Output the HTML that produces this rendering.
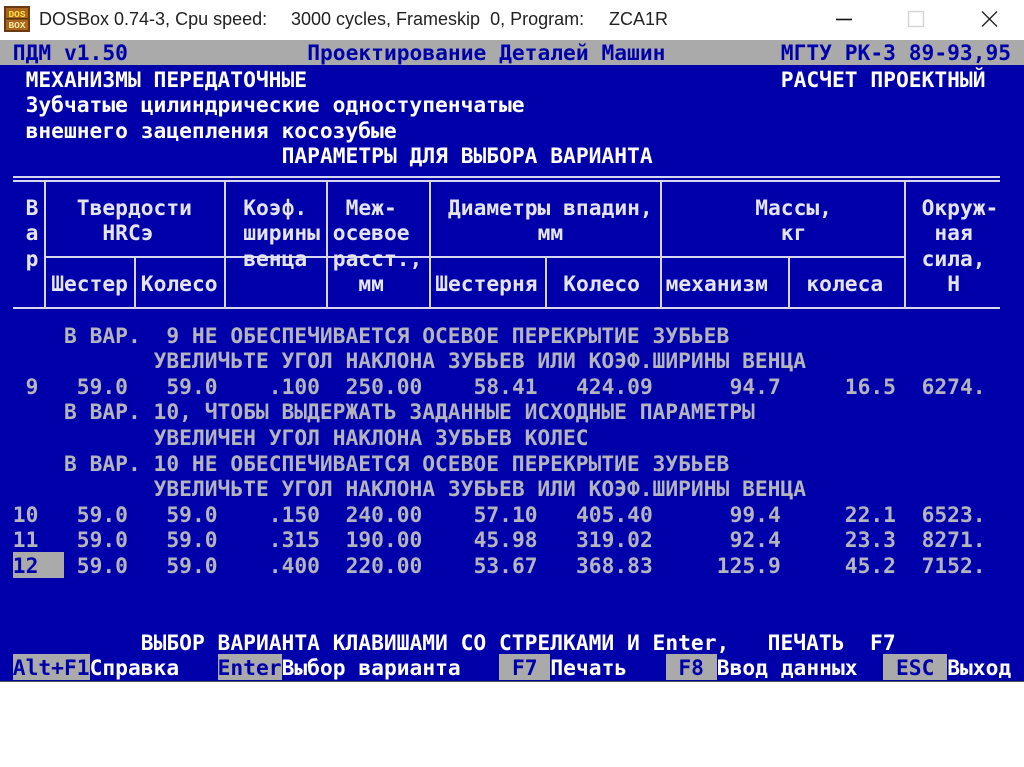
<!DOCTYPE html>
<html lang="ru"><head><meta charset="utf-8"><title>DOSBox</title>
<style>
html,body{margin:0;padding:0;background:#fff;width:1024px;height:767px;overflow:hidden}
#s{position:absolute;left:0;top:40px;width:1024px;height:641px;background:#0000aa;overflow:hidden}
.bar{position:absolute;left:0;top:0;width:1024px;height:25px;background:#aaa}
.t{position:absolute;white-space:pre;font:bold 21.26px/25.6px "DejaVu Sans Mono","Liberation Mono",monospace;color:#b4b4bc;left:calc(var(--c)*12.8px);top:calc(var(--r)*25.6px + 2px)}
.w{color:#fff}.h{color:#e4e4f2}.b{color:#0000aa}
.g{position:absolute;background:#aaa;top:calc(var(--r)*25.6px);height:25.6px;left:calc(var(--c)*12.8px);width:calc(var(--n)*12.8px)}
.l{position:absolute;background:#d6d6ee}
.tt{position:absolute;top:9px;font:18px/20px "Liberation Sans",sans-serif;color:#222;white-space:pre}
</style></head><body>
<svg style="position:absolute;left:4px;top:6px" width="26" height="26" viewBox="0 0 26 26"><rect width="26" height="26" fill="#6b3a12"/><rect x="2" y="2" width="22" height="22" fill="#a8661e"/><rect x="2" y="12" width="22" height="1.5" fill="#5a300e"/><text x="13" y="11" text-anchor="middle" font-family="Liberation Mono" font-weight="bold" font-size="9.5" fill="#ffe040">DOS</text><text x="13" y="22" text-anchor="middle" font-family="Liberation Mono" font-weight="bold" font-size="9.5" fill="#ffe8a0">BOX</text></svg>
<div class="tt" style="left:39px">DOSBox 0.74-3, Cpu speed:</div>
<div class="tt" style="left:291px">3000 cycles, Frameskip  0, Program:</div>
<div class="tt" style="left:609px">ZCA1R</div>
<svg style="position:absolute;left:820px;top:0" width="204" height="40"><path d="M16 19.5H32" stroke="#111" stroke-width="1.6"/><rect x="88.5" y="11.5" width="15" height="15" fill="#fff" stroke="#d4d4d4" stroke-width="1.4"/><path d="M162 11.5L177 26.5M177 11.5L162 26.5" stroke="#222" stroke-width="1.4"/></svg>
<div id="s">
<div class="bar"></div>
<div class="g" style="--r:20;--c:1;--n:4"></div>
<div class="g" style="--r:24;--c:1;--n:6"></div>
<div class="g" style="--r:24;--c:17;--n:5"></div>
<div class="g" style="--r:24;--c:39;--n:4"></div>
<div class="g" style="--r:24;--c:52;--n:4"></div>
<div class="g" style="--r:24;--c:69;--n:5"></div>

<div class="l" style="left:13px;top:136px;width:987px;height:1.6px"></div>
<div class="l" style="left:13px;top:140px;width:987px;height:1.6px"></div>
<div class="l" style="left:13px;top:267px;width:987px;height:1.6px"></div>
<div class="l" style="left:45px;top:216px;width:615px;height:2px"></div>
<div class="l" style="left:660px;top:216px;width:244px;height:2px"></div>
<div class="l" style="left:43.5px;top:141px;width:2.4px;height:127px"></div>
<div class="l" style="left:133.5px;top:217px;width:2.4px;height:51px"></div>
<div class="l" style="left:223.5px;top:141px;width:2.4px;height:127px"></div>
<div class="l" style="left:326px;top:141px;width:2.4px;height:127px"></div>
<div class="l" style="left:428.5px;top:141px;width:2.4px;height:127px"></div>
<div class="l" style="left:544.5px;top:217px;width:2.4px;height:51px"></div>
<div class="l" style="left:659.5px;top:141px;width:2.4px;height:127px"></div>
<div class="l" style="left:788px;top:217px;width:2.4px;height:51px"></div>
<div class="l" style="left:903.5px;top:141px;width:2.4px;height:127px"></div>

<span class="t b" style="--r:0;--c:1;top:1px">ПДМ v1.50</span>
<span class="t b" style="--r:0;--c:24;top:1px">Проектирование Деталей Машин</span>
<span class="t b" style="--r:0;--c:61;top:1px">МГТУ РК-3 89-93,95</span>

<span class="t w" style="--r:1;--c:2">МЕХАНИЗМЫ ПЕРЕДАТОЧНЫЕ</span>
<span class="t w" style="--r:1;--c:61">РАСЧЕТ ПРОЕКТНЫЙ</span>
<span class="t w" style="--r:2;--c:2">Зубчатые цилиндрические одноступенчатые</span>
<span class="t w" style="--r:3;--c:2">внешнего зацепления косозубые</span>
<span class="t w" style="--r:4;--c:22">ПАРАМЕТРЫ ДЛЯ ВЫБОРА ВАРИАНТА</span>

<span class="t h" style="--r:6;--c:2">В</span><span class="t h" style="--r:6;--c:6">Твердости</span><span class="t h" style="--r:6;--c:19">Коэф.</span><span class="t h" style="--r:6;--c:27">Меж-</span><span class="t h" style="--r:6;--c:35">Диаметры впадин,</span><span class="t h" style="--r:6;--c:59">Массы,</span><span class="t h" style="--r:6;--c:72">Окруж-</span>
<span class="t h" style="--r:7;--c:2">а</span><span class="t h" style="--r:7;--c:8">HRCэ</span><span class="t h" style="--r:7;--c:19">ширины</span><span class="t h" style="--r:7;--c:26">осевое</span><span class="t h" style="--r:7;--c:42">мм</span><span class="t h" style="--r:7;--c:61">кг</span><span class="t h" style="--r:7;--c:73">ная</span>
<span class="t h" style="--r:8;--c:2">р</span><span class="t h" style="--r:8;--c:19">венца</span><span class="t h" style="--r:8;--c:26">расст.,</span><span class="t h" style="--r:8;--c:72">сила,</span>
<span class="t h" style="--r:9;--c:4">Шестер</span><span class="t h" style="--r:9;--c:11">Колесо</span><span class="t h" style="--r:9;--c:28">мм</span><span class="t h" style="--r:9;--c:34">Шестерня</span><span class="t h" style="--r:9;--c:44">Колесо</span><span class="t h" style="--r:9;--c:52">механизм</span><span class="t h" style="--r:9;--c:63">колеса</span><span class="t h" style="--r:9;--c:74">Н</span>

<span class="t" style="--r:11;--c:5">В ВАР.  9 НЕ ОБЕСПЕЧИВАЕТСЯ ОСЕВОЕ ПЕРЕКРЫТИЕ ЗУБЬЕВ</span>
<span class="t" style="--r:12;--c:12">УВЕЛИЧЬТЕ УГОЛ НАКЛОНА ЗУБЬЕВ ИЛИ КОЭФ.ШИРИНЫ ВЕНЦА</span>
<span class="t" style="--r:13;--c:2">9</span><span class="t" style="--r:13;--c:6">59.0</span><span class="t" style="--r:13;--c:13">59.0</span><span class="t" style="--r:13;--c:21">.100</span><span class="t" style="--r:13;--c:27">250.00</span><span class="t" style="--r:13;--c:37">58.41</span><span class="t" style="--r:13;--c:45">424.09</span><span class="t" style="--r:13;--c:57">94.7</span><span class="t" style="--r:13;--c:66">16.5</span><span class="t" style="--r:13;--c:72">6274.</span>
<span class="t" style="--r:14;--c:5">В ВАР. 10, ЧТОБЫ ВЫДЕРЖАТЬ ЗАДАННЫЕ ИСХОДНЫЕ ПАРАМЕТРЫ</span>
<span class="t" style="--r:15;--c:12">УВЕЛИЧЕН УГОЛ НАКЛОНА ЗУБЬЕВ КОЛЕС</span>
<span class="t" style="--r:16;--c:5">В ВАР. 10 НЕ ОБЕСПЕЧИВАЕТСЯ ОСЕВОЕ ПЕРЕКРЫТИЕ ЗУБЬЕВ</span>
<span class="t" style="--r:17;--c:12">УВЕЛИЧЬТЕ УГОЛ НАКЛОНА ЗУБЬЕВ ИЛИ КОЭФ.ШИРИНЫ ВЕНЦА</span>
<span class="t" style="--r:18;--c:1">10</span><span class="t" style="--r:18;--c:6">59.0</span><span class="t" style="--r:18;--c:13">59.0</span><span class="t" style="--r:18;--c:21">.150</span><span class="t" style="--r:18;--c:27">240.00</span><span class="t" style="--r:18;--c:37">57.10</span><span class="t" style="--r:18;--c:45">405.40</span><span class="t" style="--r:18;--c:57">99.4</span><span class="t" style="--r:18;--c:66">22.1</span><span class="t" style="--r:18;--c:72">6523.</span>
<span class="t" style="--r:19;--c:1">11</span><span class="t" style="--r:19;--c:6">59.0</span><span class="t" style="--r:19;--c:13">59.0</span><span class="t" style="--r:19;--c:21">.315</span><span class="t" style="--r:19;--c:27">190.00</span><span class="t" style="--r:19;--c:37">45.98</span><span class="t" style="--r:19;--c:45">319.02</span><span class="t" style="--r:19;--c:57">92.4</span><span class="t" style="--r:19;--c:66">23.3</span><span class="t" style="--r:19;--c:72">8271.</span>
<span class="t b" style="--r:20;--c:1">12</span><span class="t" style="--r:20;--c:6">59.0</span><span class="t" style="--r:20;--c:13">59.0</span><span class="t" style="--r:20;--c:21">.400</span><span class="t" style="--r:20;--c:27">220.00</span><span class="t" style="--r:20;--c:37">53.67</span><span class="t" style="--r:20;--c:45">368.83</span><span class="t" style="--r:20;--c:56">125.9</span><span class="t" style="--r:20;--c:66">45.2</span><span class="t" style="--r:20;--c:72">7152.</span>

<span class="t w" style="--r:23;--c:11">ВЫБОР ВАРИАНТА КЛАВИШАМИ СО СТРЕЛКАМИ И Enter,   ПЕЧАТЬ  F7</span>
<span class="t b" style="--r:24;--c:1">Alt+F1</span><span class="t w" style="--r:24;--c:7">Справка</span>
<span class="t b" style="--r:24;--c:17">Enter</span><span class="t w" style="--r:24;--c:22">Выбор варианта</span>
<span class="t b" style="--r:24;--c:40">F7</span><span class="t w" style="--r:24;--c:43">Печать</span>
<span class="t b" style="--r:24;--c:53">F8</span><span class="t w" style="--r:24;--c:56">Ввод данных</span>
<span class="t b" style="--r:24;--c:70">ESC</span><span class="t w" style="--r:24;--c:74">Выход</span>
</div>
<div style="position:absolute;left:0;top:681px;width:1024px;height:1px;background:#555"></div>
</body></html>
